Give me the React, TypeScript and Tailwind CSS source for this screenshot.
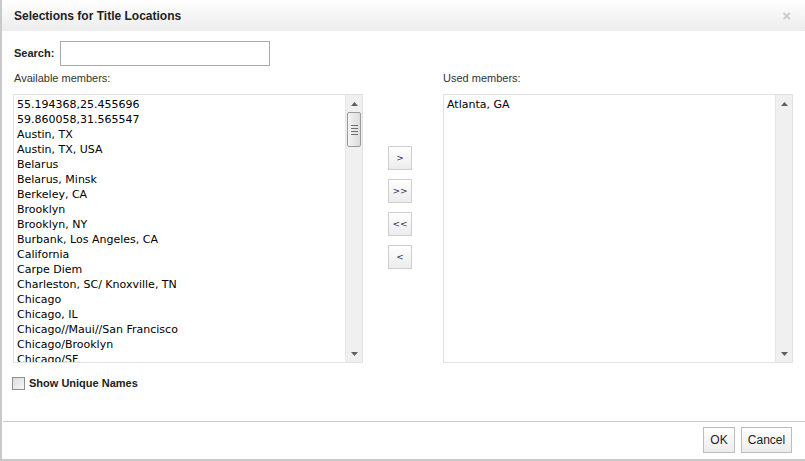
import React from 'react';

const available = [
  '55.194368,25.455696',
  '59.860058,31.565547',
  'Austin, TX',
  'Austin, TX, USA',
  'Belarus',
  'Belarus, Minsk',
  'Berkeley, CA',
  'Brooklyn',
  'Brooklyn, NY',
  'Burbank, Los Angeles, CA',
  'California',
  'Carpe Diem',
  'Charleston, SC/ Knoxville, TN',
  'Chicago',
  'Chicago, IL',
  'Chicago//Maui//San Francisco',
  'Chicago/Brooklyn',
  'Chicago/SF',
];

const used = ['Atlanta, GA'];

function Arrow({ down }: { down?: boolean }) {
  return (
    <div className="h-[17px] flex items-center justify-center">
      <svg width="7" height="4" viewBox="0 0 7 4">
        {down ? <path d="M0 0h7L3.5 4z" fill="#606060" /> : <path d="M0 4h7L3.5 0z" fill="#606060" />}
      </svg>
    </div>
  );
}

function Scrollbar({ thumb }: { thumb?: boolean }) {
  return (
    <div className="w-[17px] shrink-0 bg-[#f0f0f0] border-l border-[#e6e6e6] flex flex-col">
      <Arrow />
      <div className="flex-1">
        {thumb && (
          <div className="mx-px h-[35px] rounded-[2px] border border-[#9a9a9a] bg-gradient-to-r from-[#f4f4f4] to-[#dcdcdc] flex flex-col items-center justify-center gap-[2px]">
            <div className="w-[7px] h-px bg-[#707070]" />
            <div className="w-[7px] h-px bg-[#707070]" />
            <div className="w-[7px] h-px bg-[#707070]" />
            <div className="w-[7px] h-px bg-[#707070]" />
          </div>
        )}
      </div>
      <Arrow down />
    </div>
  );
}

function ListBox({ items, thumb }: { items: string[]; thumb?: boolean }) {
  return (
    <div className="h-[269px] w-[350px] border border-[#e2e2e2] flex bg-white">
      <div className="flex-1 overflow-hidden pl-[3px] pt-[2px] font-['DejaVu_Sans',Verdana,sans-serif] text-[11px] leading-[15px] text-black">
        {items.map((it) => (
          <div key={it} className="whitespace-nowrap">{it}</div>
        ))}
      </div>
      <Scrollbar thumb={thumb} />
    </div>
  );
}

function MoveButton({ label }: { label: string }) {
  return (
    <button className="w-[24px] h-[24px] border border-[#cfcfcf] bg-gradient-to-b from-white to-[#ececec] text-[9px] leading-none text-[#22346e] font-['DejaVu_Sans',Verdana,sans-serif] flex items-center justify-center">
      {label}
    </button>
  );
}

export default function App() {
  return (
    <div className="w-[805px] h-[461px] bg-white overflow-hidden font-['Liberation_Sans',Arial,sans-serif]">
      <div className="w-[805px] h-[461px] border-l-2 border-b-2 border-[#c9c9c9] flex flex-col">
        {/* Header */}
        <div className="h-[31px] shrink-0 flex items-center justify-between pl-[12px] pr-[14px] bg-gradient-to-b from-white to-[#ececec]">
          <span className="text-[12px] font-bold text-[#222]">Selections for Title Locations</span>
          <span className="text-[15px] font-bold text-[#c8c8c8] leading-none">×</span>
        </div>

        {/* Body */}
        <div className="flex-1 pl-[11px] pt-[10px]">
          <div className="flex items-center gap-[6px] pl-px">
            <label className="text-[11px] font-bold text-[#222]">Search:</label>
            <input className="w-[210px] h-[25px] border border-[#ababab] bg-white outline-none px-1 text-[11px]" />
          </div>

          <div className="flex mt-[6px]">
            <div className="w-[350px]">
              <div className="pl-px h-[13px] text-[11px] leading-[13px] text-[#333]">Available members:</div>
              <div className="mt-[9px]">
                <ListBox items={available} thumb />
              </div>
            </div>

            <div className="w-[80px] pt-[74px] pl-[25px] flex flex-col gap-[9px]">
              <MoveButton label=">" />
              <MoveButton label=">>" />
              <MoveButton label="<<" />
              <MoveButton label="<" />
            </div>

            <div className="w-[350px]">
              <div className="h-[13px] text-[11px] leading-[13px] text-[#333]">Used members:</div>
              <div className="mt-[9px]">
                <ListBox items={used} />
              </div>
            </div>
          </div>

          <div className="flex items-center gap-[4px] mt-[12px] -ml-px">
            <div className="w-[13px] h-[13px] border border-[#8f8f8f] bg-gradient-to-br from-[#dcdcdc] to-[#f7f7f7]" />
            <span className="text-[11px] font-bold text-[#222]">Show Unique Names</span>
          </div>
        </div>

        {/* Footer */}
        <div className="h-[38px] shrink-0 ml-px border-t border-[#cccccc] flex justify-end items-start pt-[5px] pr-[13px] gap-[6px]">
          <button className="w-[32px] h-[26px] border border-[#bdbdbd] bg-gradient-to-b from-white to-[#ececec] text-[12px] text-[#222]">OK</button>
          <button className="w-[51px] h-[26px] border border-[#bdbdbd] bg-gradient-to-b from-white to-[#ececec] text-[12px] text-[#222]">Cancel</button>
        </div>
      </div>
    </div>
  );
}
